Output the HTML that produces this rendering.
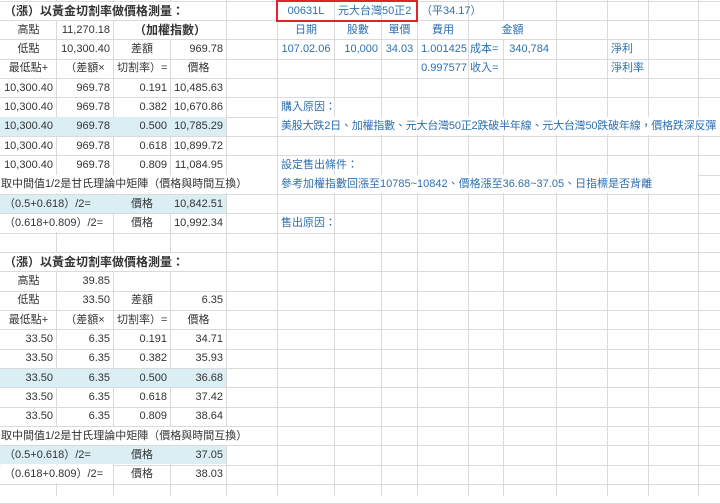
<!DOCTYPE html>
<html><head><meta charset="utf-8"><style>
body{margin:0;width:720px;height:496px;overflow:hidden;background:#fff;position:relative;font-family:"Liberation Sans","Noto Sans CJK TC",sans-serif;font-size:11px;color:#333}
.h{position:absolute;left:0;width:720px;height:1px;background:#dadada}
.v{position:absolute;top:0;height:496px;width:1px;background:#dadada}
.c{position:absolute;height:18px;line-height:19px;top:calc(var(--r)*19.33px + 1.5px);white-space:nowrap;padding:0 3px;box-sizing:border-box;background:#fff;overflow:hidden}
.R{text-align:right}.C{text-align:center}
.b{font-weight:bold;font-size:12px}
.hl{position:absolute;left:0;width:226px;height:18.3px;background:#daeef3;top:calc(var(--r)*19.33px + 1.5px)}
.u{color:#2e6fb0}
</style></head><body>
<div id="g"></div>
<script>
var g=document.getElementById('g'),s='';
for(var r=0;r<27;r++)s+='<div class="h" style="top:'+(r*19.33+0.8)+'px"></div>';
[56,113,170,226,277,334,381,417,468,503,556,607,648,698].forEach(function(x){s+='<div class="v" style="left:'+x+'px"></div>'});
g.innerHTML=s;
</script>
<div class="hl" style="--r:6"></div><div class="hl" style="--r:10"></div><div class="hl" style="--r:19"></div><div class="hl" style="--r:23"></div>

<div class="c b" style="--r:0;left:1px;width:225px">（漲）以黃金切割率做價格測量：</div>
<div class="c C" style="--r:1;left:1px;width:55px;background:none">高點</div>
<div class="c R" style="--r:1;left:57px;width:56px;background:none">11,270.18</div>
<div class="c C b" style="--r:1;left:114px;width:112px">（加權指數）</div>
<div class="c C" style="--r:2;left:1px;width:55px;background:none">低點</div>
<div class="c R" style="--r:2;left:57px;width:56px;background:none">10,300.40</div>
<div class="c C" style="--r:2;left:114px;width:56px;background:none">差額</div>
<div class="c R" style="--r:2;left:171px;width:55px;background:none">969.78</div>
<div class="c C" style="--r:3;left:1px;width:55px;background:none">最低點+</div>
<div class="c C" style="--r:3;left:57px;width:56px;background:none">（差額×</div>
<div class="c C" style="--r:3;left:114px;width:56px;background:none">切割率）=</div>
<div class="c C" style="--r:3;left:171px;width:55px;background:none">價格</div>
<div style="position:absolute;left:0;top:0" id="t1"></div>
<div class="c" style="--r:9;left:0;width:277px;padding-left:1px">取中間值1/2是甘氏理論中矩陣（價格與時間互換）</div>
<div class="c" style="--r:10;left:1px;width:169px;background:none">（0.5+0.618）/2=</div>
<div class="c C" style="--r:10;left:114px;width:56px;background:none">價格</div>
<div class="c R" style="--r:10;left:171px;width:55px;background:none">10,842.51</div>
<div class="c" style="--r:11;left:1px;width:112px">（0.618+0.809）/2=</div>
<div class="c C" style="--r:11;left:114px;width:56px;background:none">價格</div>
<div class="c R" style="--r:11;left:171px;width:55px;background:none">10,992.34</div>

<div class="c b" style="--r:13;left:1px;width:225px">（漲）以黃金切割率做價格測量：</div>
<div class="c C" style="--r:14;left:1px;width:55px;background:none">高點</div>
<div class="c R" style="--r:14;left:57px;width:56px;background:none">39.85</div>
<div class="c C" style="--r:15;left:1px;width:55px;background:none">低點</div>
<div class="c R" style="--r:15;left:57px;width:56px;background:none">33.50</div>
<div class="c C" style="--r:15;left:114px;width:56px;background:none">差額</div>
<div class="c R" style="--r:15;left:171px;width:55px;background:none">6.35</div>
<div class="c C" style="--r:16;left:1px;width:55px;background:none">最低點+</div>
<div class="c C" style="--r:16;left:57px;width:56px;background:none">（差額×</div>
<div class="c C" style="--r:16;left:114px;width:56px;background:none">切割率）=</div>
<div class="c C" style="--r:16;left:171px;width:55px;background:none">價格</div>
<div class="c" style="--r:22;left:0;width:277px;padding-left:1px">取中間值1/2是甘氏理論中矩陣（價格與時間互換）</div>
<div class="c" style="--r:23;left:1px;width:169px;background:none">（0.5+0.618）/2=</div>
<div class="c C" style="--r:23;left:114px;width:56px;background:none">價格</div>
<div class="c R" style="--r:23;left:171px;width:55px;background:none">37.05</div>
<div class="c" style="--r:24;left:1px;width:112px">（0.618+0.809）/2=</div>
<div class="c C" style="--r:24;left:114px;width:56px;background:none">價格</div>
<div class="c R" style="--r:24;left:171px;width:55px;background:none">38.03</div>

<script>
function rows(r0,a,b,c,d){var s='';for(var i=0;i<5;i++){var r=r0+i;s+='<div class="c R" style="--r:'+r+';left:1px;width:55px;background:none">'+a+'</div><div class="c R" style="--r:'+r+';left:57px;width:56px;background:none">'+b+'</div><div class="c R" style="--r:'+r+';left:114px;width:56px;background:none">'+c[i]+'</div><div class="c R" style="--r:'+r+';left:171px;width:55px;background:none">'+d[i]+'</div>';}return s;}
var rt=['0.191','0.382','0.500','0.618','0.809'];
document.getElementById('t1').innerHTML=rows(4,'10,300.40','969.78',rt,['10,485.63','10,670.86','10,785.29','10,899.72','11,084.95'])+rows(17,'33.50','6.35',rt,['34.71','35.93','36.68','37.42','38.64']);
</script>

<div class="c u C" style="--r:0;left:278px;width:56px;background:none">00631L</div>
<div class="c u" style="--r:0;left:335px;width:82px;background:none">元大台灣50正2</div>
<div class="c u" style="--r:0;left:418px;width:80px;background:none">（平34.17）</div>
<div style="position:absolute;left:276px;top:0;width:138px;height:18px;border:2px solid #e0242a"></div>
<div class="c u C" style="--r:1;left:278px;width:56px;background:none">日期</div>
<div class="c u C" style="--r:1;left:335px;width:46px;background:none">股數</div>
<div class="c u C" style="--r:1;left:382px;width:35px;background:none">單價</div>
<div class="c u C" style="--r:1;left:418px;width:50px;background:none">費用</div>
<div class="c u C" style="--r:1;left:469px;width:87px">金額</div>
<div class="c u C" style="--r:2;left:278px;width:56px;background:none">107.02.06</div>
<div class="c u R" style="--r:2;left:335px;width:46px;background:none">10,000</div>
<div class="c u C" style="--r:2;left:382px;width:35px;background:none">34.03</div>
<div class="c u R" style="--r:2;left:418px;width:50px;background:none;padding:0 1px">1.001425</div>
<div class="c u" style="--r:2;left:469px;width:34px;background:none;padding:0 1px">成本=</div>
<div class="c u R" style="--r:2;left:504px;width:52px;padding-right:7px;background:none">340,784</div>
<div class="c u" style="--r:2;left:608px;width:40px;background:none">淨利</div>
<div class="c u R" style="--r:3;left:418px;width:50px;background:none;padding:0 1px">0.997577</div>
<div class="c u" style="--r:3;left:469px;width:34px;background:none;padding:0 1px">收入=</div>
<div class="c u" style="--r:3;left:608px;width:40px;background:none">淨利率</div>
<div class="c u" style="--r:5;left:278px;width:60px;background:none;overflow:visible">購入原因：</div>
<div class="c u" style="--r:6;left:278px;width:442px;letter-spacing:-0.2px">美股大跌2日、加權指數、元大台灣50正2跌破半年線、元大台灣50跌破年線，價格跌深反彈</div>
<div class="c u" style="--r:8;left:278px;width:80px;background:none;overflow:visible">設定售出條件：</div>
<div class="c u" style="--r:9;left:278px;width:420px">參考加權指數回漲至10785~10842、價格漲至36.68~37.05、日指標是否背離</div>
<div class="c u" style="--r:11;left:278px;width:60px;background:none;overflow:visible">售出原因：</div>
</body></html>
